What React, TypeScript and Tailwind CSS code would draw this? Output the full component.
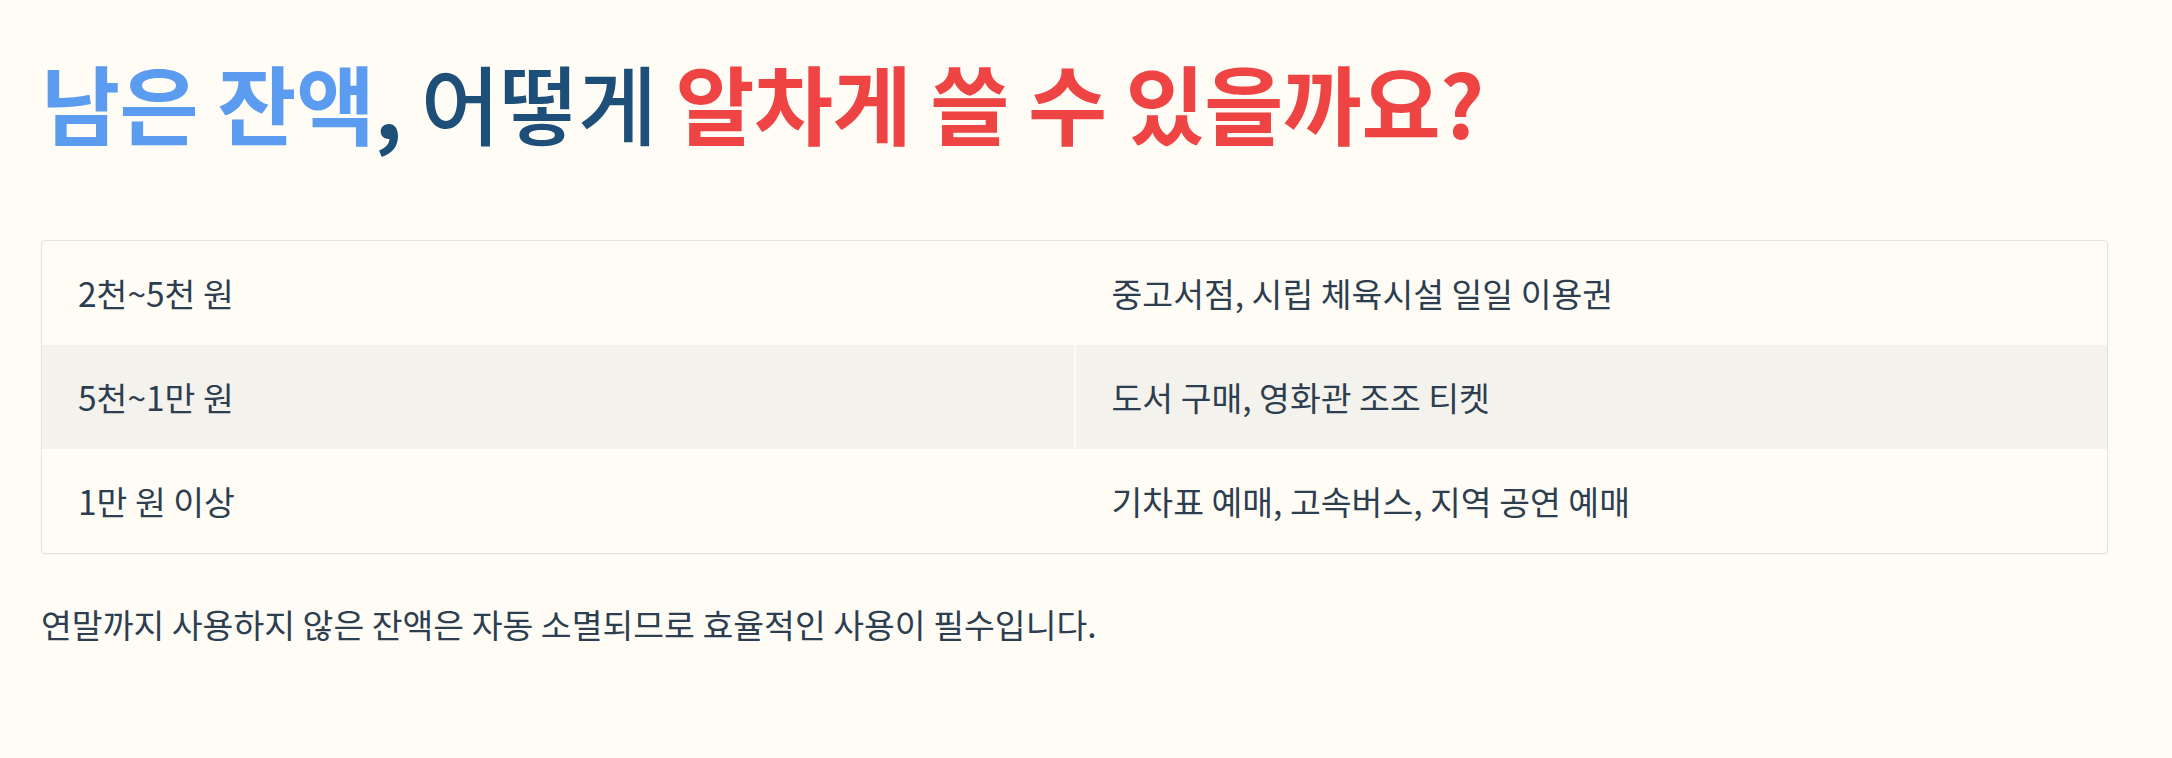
const rows = [
  { price: '2천~5천 원', use: '중고서점, 시립 체육시설 일일 이용권' },
  { price: '5천~1만 원', use: '도서 구매, 영화관 조조 티켓' },
  { price: '1만 원 이상', use: '기차표 예매, 고속버스, 지역 공연 예매' },
];

export default function App() {
  return (
    <div
      className="min-h-[758px] bg-[#fffcf5] pl-[41px] pt-[50px] text-[#2c3e50]"
      style={{ fontFamily: '"Noto Sans CJK KR", "Noto Sans", sans-serif' }}
    >
      <h1 className="text-[86px] leading-[1.2] tracking-[-0.5px] text-[#1d4f78]">
        <span className="font-bold text-[#5b9cf0]">남은 잔액</span>
        <span className="font-bold">,</span> <span className="font-medium">어떻게</span>{' '}
        <span className="font-bold text-[#ef4444]">알차게 쓸 수 있을까요?</span>
      </h1>

      <div className="mt-[87px] w-[2067px] overflow-hidden rounded-[4px] border border-[#e6e3dc] shadow-[0_1px_2px_rgba(0,0,0,0.04)]">
        <table className="w-full border-collapse text-[33.5px]">
          <tbody>
            {rows.map((row, i) => (
              <tr key={row.price} className={i === 1 ? 'bg-[#f4f2ec]' : ''}>
                <td className="h-[104px] w-1/2 border-r-2 border-[#fffcf5] pl-[36px] align-middle">
                  {row.price}
                </td>
                <td className="h-[104px] w-1/2 pl-[36px] align-middle">{row.use}</td>
              </tr>
            ))}
          </tbody>
        </table>
      </div>

      <p className="mt-[45px] text-[33.5px]">
        연말까지 사용하지 않은 잔액은 자동 소멸되므로 효율적인 사용이 필수입니다.
      </p>
    </div>
  );
}
